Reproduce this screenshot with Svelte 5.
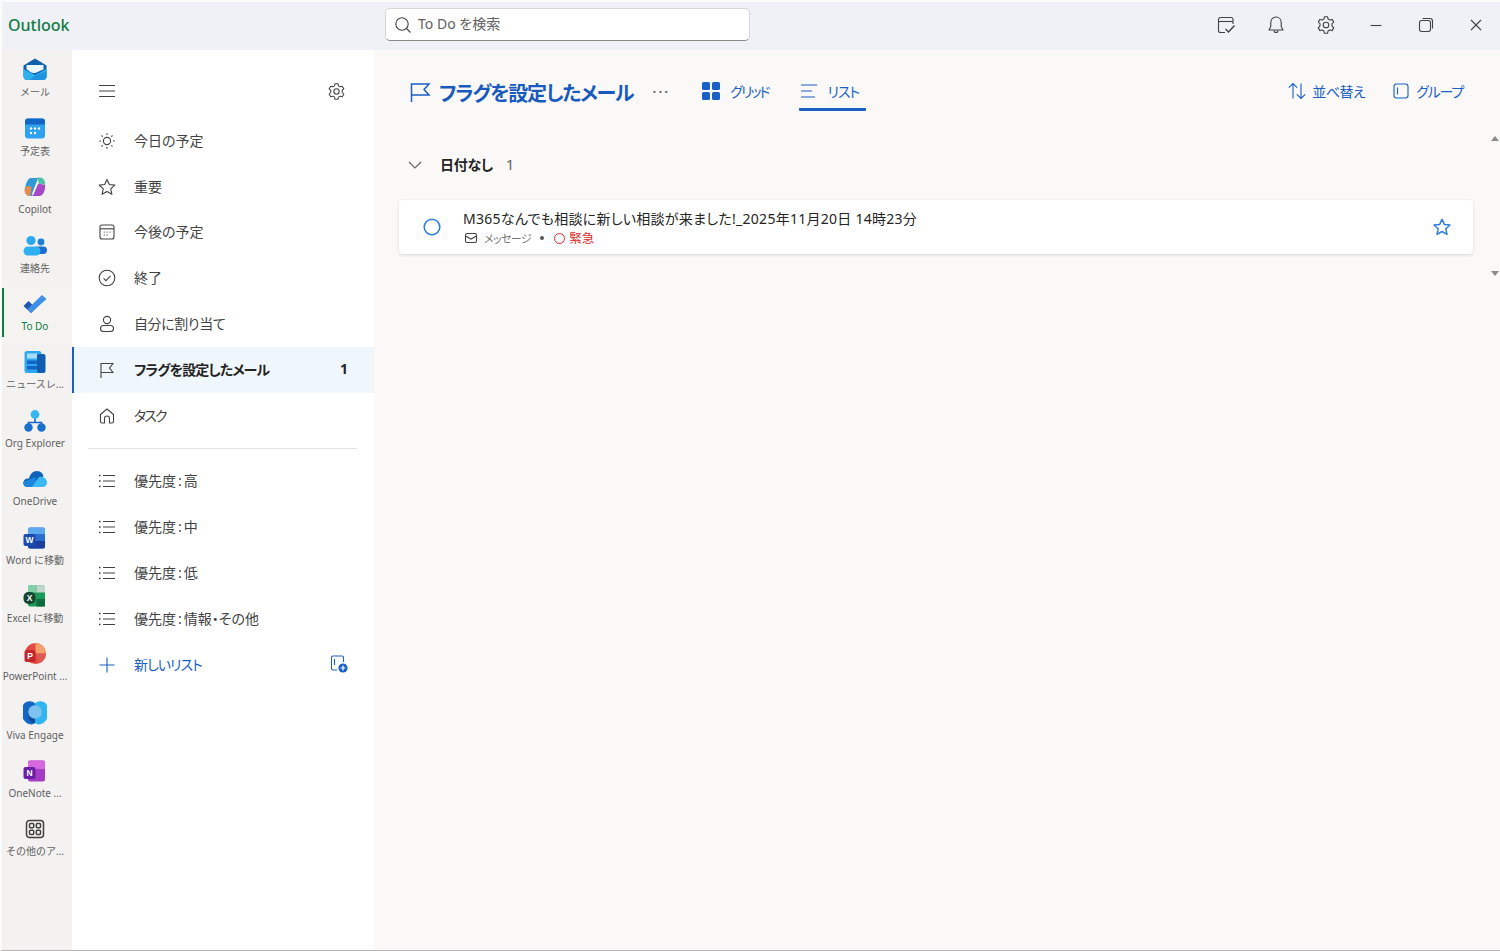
<script>
  const navTop = [
    { label: '今日の予定', icon: 'sun' },
    { label: '重要', icon: 'star' },
    { label: '今後の予定', icon: 'cal' },
    { label: '終了', icon: 'check' },
    { label: '自分に割り当て', icon: 'person', tight: 'tight-s' },
    { label: 'フラグを設定したメール', icon: 'flag', active: true, count: 1 },
    { label: 'タスク', icon: 'home', tight: 'tight-l' }
  ];
  const lists = [['優先度', '高'], ['優先度', '中'], ['優先度', '低'], ['優先度', '情報・その他']];
  const rail = [
    ['mail', 'メール'], ['calendar', '予定表'], ['copilot', 'Copilot'], ['people', '連絡先'],
    ['todo', 'To Do'], ['news', 'ニュースレ...'], ['org', 'Org Explorer'], ['drive', 'OneDrive'],
    ['word', 'Word に移動'], ['excel', 'Excel に移動'], ['ppt', 'PowerPoint ...'], ['viva', 'Viva Engage'],
    ['note', 'OneNote ...'], ['more', 'その他のア...']
  ];
</script>

{#snippet railIcon(k)}
  <svg class="rail-svg" viewBox="0 0 24 24" width="24" height="24">
    {#if k === 'mail'}
      <path d="M12 0.5 L23.5 7.5 V18 a4 4 0 0 1-4 4 H4.5 a4 4 0 0 1-4-4 V7.5 Z" fill="#0f5fae"/>
      <path d="M0.5 11 L12 17 L23.5 11 V18 a4 4 0 0 1-4 4 H4.5 a4 4 0 0 1-4-4 Z" fill="#2fb0ef"/>
      <path d="M3.5 7 H20.5 V11.5 C16 13 14 15 11 15 C8 15 6 13 3.5 11 Z" fill="#eaf6fd"/>
      <path d="M7 22 C11 17 17 16 23.5 13 V18 a4 4 0 0 1-4 4 Z" fill="#1f93e0"/>
    {:else if k === 'calendar'}
      <rect x="2" y="1.5" width="20" height="20" rx="3" fill="#2ea2f0"/>
      <path d="M2 7.5 V4.5 a3 3 0 0 1 3-3 H19 a3 3 0 0 1 3 3 V7.5 Z" fill="#1466c4"/>
      <g fill="#fff"><circle cx="8" cy="11.5" r="1.2"/><circle cx="12" cy="11.5" r="1.2"/><circle cx="16" cy="11.5" r="1.2"/><circle cx="8" cy="16" r="1.2"/><circle cx="12" cy="16" r="1.2"/></g>
    {:else if k === 'copilot'}
      <path d="M8 3 H15 L9 21 H7 C3 21 1 17 2 13 C3 8 5 3 8 3 Z" fill="#2f9bd6"/>
      <path d="M1.8 14 C3 10 6 10.5 8.5 12 L7.5 21 C3.5 21 1 18 1.8 14 Z" fill="#e88a4c"/>
      <path d="M14 2.5 H17 C20.5 2.5 22.5 6 22 10 L16 8.5 Z" fill="#4fc2a6"/>
      <path d="M15 8.5 L22 10 C22.5 16 20 21 16 21 H9.5 Z" fill="#a948c6"/>
      <path d="M13.5 8 L15 8.5 L10.5 19.5 L9 19 Z" fill="#fff"/>
    {:else if k === 'people'}
      <circle cx="8" cy="6.5" r="4.6" fill="#2aa8ef"/>
      <circle cx="18" cy="8" r="3.4" fill="#1a7fd8"/>
      <rect x="11" y="12.5" width="13" height="7.5" rx="3.7" fill="#1c6fd0"/>
      <rect x="0.5" y="12.5" width="17" height="9" rx="4.5" fill="#30b0f2"/>
    {:else if k === 'todo'}
      <path d="M0.5 14 L5.5 9 L13 16 L8 21 Z" fill="#1e56b0"/>
      <path d="M8 21 L4.5 17 L19 3 L23.5 7 Z" fill="#3f8fe6"/>
    {:else if k === 'news'}
      <rect x="1.5" y="1" width="17" height="22" rx="2.5" fill="#2ea8ee"/>
      <rect x="14" y="4" width="8.5" height="19" rx="2" fill="#0f5cb0"/>
      <rect x="4" y="3.5" width="10" height="5" fill="#a7dcf8"/>
      <rect x="4" y="10.5" width="10" height="3.5" fill="#1466c4"/>
      <rect x="4" y="16" width="10" height="3.5" fill="#1466c4"/>
    {:else if k === 'org'}
      <path d="M12 8 V14 M5.5 17 V13.5 H18.5 V17" fill="none" stroke="#1466c4" stroke-width="1.6"/>
      <circle cx="12" cy="5.5" r="4.4" fill="#37b6f2"/>
      <circle cx="5.5" cy="18.5" r="4.2" fill="#1a6fcc"/>
      <circle cx="18.5" cy="18.5" r="4.2" fill="#1a6fcc"/>
    {:else if k === 'drive'}
      <path d="M5 20 C1 20 0 17 0.5 15 C1 12 4 11 6 11.5 C7 7 10 4 14 4 C18 4 20 7 20.5 9 L12 20 Z" fill="#0f62b8"/>
      <path d="M5 20 C1 20 0 17 0.5 15 L12 10 L16 20 Z" fill="#1b86de"/>
      <path d="M9 20 L16 10 C20 9 24 12 24 15.5 C24 18 22 20 19.5 20 Z" fill="#3ab8f4"/>
    {:else if k === 'word'}
      <rect x="5" y="1.5" width="17" height="21" rx="2" fill="#2a6fd0"/>
      <path d="M5 3.5 a2 2 0 0 1 2-2 H20 a2 2 0 0 1 2 2 V8 H5 Z" fill="#5fa8ee"/>
      <path d="M5 15 H22 V20.5 a2 2 0 0 1-2 2 H7 a2 2 0 0 1-2-2 Z" fill="#1b3f9e"/>
      <rect x="0.5" y="8" width="12" height="12" rx="2" fill="#1a4bb0"/>
      <text x="6.5" y="17" class="mini">W</text>
    {:else if k === 'excel'}
      <rect x="5" y="1.5" width="17" height="21" rx="2" fill="#1c9a5a"/>
      <rect x="5" y="1.5" width="8.5" height="7" fill="#7fd0a4"/>
      <rect x="13.5" y="1.5" width="8.5" height="7" fill="#c2d6cc"/>
      <rect x="13.5" y="15" width="8.5" height="7.5" fill="#0f6b3f"/>
      <rect x="0.5" y="8" width="12" height="12" rx="5" fill="#14472f"/>
      <text x="6.5" y="17" class="mini">X</text>
    {:else if k === 'ppt'}
      <circle cx="12.5" cy="11.5" r="10.5" fill="#e34a3f"/>
      <path d="M12.5 1 A10.5 10.5 0 0 1 23 11.5 H12.5 Z" fill="#f4a06a"/>
      <path d="M12.5 11.5 H23 A10.5 10.5 0 0 1 15.5 21.5 Z" fill="#de5a52"/>
      <rect x="1.5" y="8" width="11" height="12" rx="2" fill="#c4262a"/>
      <text x="7" y="17" class="mini">P</text>
    {:else if k === 'viva'}
      <path d="M12 2.5 C9 -1.5 -0.5 -0.5 -0.5 7 V15 C-0.5 21 8 26 12 22 Z" fill="#1466c4"/>
      <path d="M12 2.5 C15 -1.5 24.5 -0.5 24.5 7 V15 C24.5 21 16 26 12 22 Z" fill="#30b4f2"/>
      <circle cx="12" cy="11" r="6.8" fill="#7cc4ee"/>
      <path d="M12 17.8 C8 17.8 5.2 15 5.2 11 C4 17 8 23 12 22 Z" fill="#0f4c9a"/>
    {:else if k === 'note'}
      <rect x="5" y="1.5" width="17" height="21" rx="2" fill="#a63cc4"/>
      <path d="M5 3.5 a2 2 0 0 1 2-2 H20 a2 2 0 0 1 2 2 V10 H5 Z" fill="#d868e0"/>
      <rect x="0.5" y="8" width="12" height="12" rx="2" fill="#6a1fa8"/>
      <text x="6.5" y="17" class="mini">N</text>
    {:else}
      <g fill="none" stroke="#424242" stroke-width="1.5">
        <rect x="3.5" y="3.5" width="17" height="17" rx="3"/>
        <rect x="6.5" y="6.5" width="4.2" height="4.2" rx="1"/><rect x="13.3" y="6.5" width="4.2" height="4.2" rx="1"/>
        <rect x="6.5" y="13.3" width="4.2" height="4.2" rx="1"/><rect x="13.3" y="13.3" width="4.2" height="4.2" rx="1"/>
      </g>
    {/if}
  </svg>
{/snippet}

{#snippet navIcon(k)}
  <svg class="line" viewBox="0 0 20 20" width="20" height="20">
    {#if k === 'sun'}
      <circle cx="10" cy="10" r="3.6"/>
      <path d="M10 2.2V4M10 16V17.8M2.2 10H4M16 10H17.8M4.5 4.5L5.7 5.7M14.3 14.3L15.5 15.5M15.5 4.5L14.3 5.7M5.7 14.3L4.5 15.5"/>
    {:else if k === 'star'}
      <path d="M10 2.5 L12.3 7.5 L17.8 8.1 L13.7 11.8 L14.9 17.2 L10 14.4 L5.1 17.2 L6.3 11.8 L2.2 8.1 L7.7 7.5 Z" stroke-linejoin="round"/>
    {:else if k === 'cal'}
      <rect x="3" y="3" width="14" height="14" rx="2"/>
      <path d="M3 6.8H17"/>
      <path d="M6.8 10.2h.8M9.7 10.2h.8M12.6 10.2h.8M6.8 13h.8M9.7 13h.8" stroke-width="1.3"/>
    {:else if k === 'check'}
      <circle cx="10" cy="10" r="7.8"/>
      <path d="M6.6 10.4 L9 12.7 L13.5 7.8"/>
    {:else if k === 'person'}
      <circle cx="10" cy="6" r="3.6"/>
      <rect x="3.5" y="11.5" width="13" height="6" rx="3"/>
    {:else if k === 'flag'}
      <path d="M4 18 V3.5 H16 L12.5 8 L16 12.5 H4"/>
    {:else if k === 'home'}
      <path d="M7.5 17 H5 a1.5 1.5 0 0 1-1.5-1.5 V8.5 L10 3 L16.5 8.5 V15.5 a1.5 1.5 0 0 1-1.5 1.5 H12.5 V12.5 a2.5 2.5 0 0 0-5 0 Z" stroke-linejoin="round"/>
    {:else}
      <path d="M6 4.5H18M6 10H18M6 15.5H18" stroke-width="1.2"/>
      <path d="M2 4.5h1.6M2 10h1.6M2 15.5h1.6" stroke-width="1.6"/>
    {/if}
  </svg>
{/snippet}

{#snippet gear(size)}
  <svg class="line" viewBox="0 0 20 20" width={size} height={size}>
    <path d="M8.4 1.8 H11.6 L12.1 4.1 L13.9 5.1 L16.1 4.4 L17.7 7.1 L16 8.7 V10.8 L17.7 12.9 L16.1 15.6 L13.9 14.9 L12.1 15.9 L11.6 18.2 H8.4 L7.9 15.9 L6.1 14.9 L3.9 15.6 L2.3 12.9 L4 10.8 V8.7 L2.3 7.1 L3.9 4.4 L6.1 5.1 L7.9 4.1 Z" stroke-linejoin="round"/>
    <circle cx="10" cy="10" r="2.8"/>
  </svg>
{/snippet}

<div class="window">
  <header class="topbar">
    <div class="brand">Outlook</div>
    <div class="search">
      <svg class="line" viewBox="0 0 20 20" width="20" height="20"><circle cx="9" cy="9" r="6.2"/><path d="M13.5 13.5 L17.5 17.5"/></svg>
      <span>To Do を検索</span>
    </div>
    <div class="actions">
      <button aria-label="タスク">
        <svg class="line" viewBox="0 0 20 20" width="20" height="20"><path d="M9 17.5 H4.5 a2 2 0 0 1-2-2 V4.5 a2 2 0 0 1 2-2 H15 a2 2 0 0 1 2 2 V9"/><path d="M2.5 6.5H17"/><path d="M9.5 14 L12.5 17 L18.5 10.5" stroke-width="1.4"/></svg>
      </button>
      <button aria-label="通知">
        <svg class="line" viewBox="0 0 20 20" width="20" height="20"><path d="M10 2 C6.5 2 4.8 4.8 4.8 7.5 V11.5 L3 15 H17 L15.2 11.5 V7.5 C15.2 4.8 13.5 2 10 2 Z" stroke-linejoin="round"/><path d="M8 15.5 a2 2 0 0 0 4 0"/></svg>
      </button>
      <button aria-label="設定">{@render gear(20)}</button>
      <button aria-label="最小化">
        <svg class="line" viewBox="0 0 20 20" width="20" height="20"><path d="M4.5 10.5H15.5"/></svg>
      </button>
      <button aria-label="元に戻す">
        <svg class="line" viewBox="0 0 20 20" width="20" height="20"><rect x="3.5" y="5.5" width="11" height="11" rx="2.2"/><path d="M6.5 3.5 H14 a2.5 2.5 0 0 1 2.5 2.5 V13.5"/></svg>
      </button>
      <button aria-label="閉じる">
        <svg class="line" viewBox="0 0 20 20" width="20" height="20"><path d="M5 5 L15 15 M15 5 L5 15"/></svg>
      </button>
    </div>
  </header>

  <div class="body">
    <nav class="rail">
      {#each rail as [key, label]}
        <div class="rail-item" class:current={key === 'todo'}>
          {@render railIcon(key)}
          <span>{label}</span>
        </div>
      {/each}
    </nav>

    <aside class="side">
      <div class="side-head">
        <svg class="line" viewBox="0 0 20 20" width="20" height="20"><path d="M2 4.5H18M2 10H18M2 15.5H18"/></svg>
        {@render gear(19)}
      </div>
      {#each navTop as n}
        <div class="row {n.tight ?? ''}" class:active={n.active}>
          {@render navIcon(n.icon)}
          <span class="row-label">{n.label}</span>
          {#if n.count}<span class="count">{n.count}</span>{/if}
        </div>
      {/each}
      <div class="divider"></div>
      {#each lists as [a, b]}
        <div class="row">
          {@render navIcon('list')}
          <span class="row-label">{a}<span class="colon">:</span>{b}</span>
        </div>
      {/each}
      <div class="row new">
        <svg class="line blue" viewBox="0 0 20 20" width="20" height="20"><path d="M10 2.5V17.5M2.5 10H17.5"/></svg>
        <span class="row-label">新しいリスト</span>
        <svg class="addlist" viewBox="0 0 20 20" width="20" height="20">
          <path d="M8 16 H4 a1.5 1.5 0 0 1-1.5-1.5 V3.5 A1.5 1.5 0 0 1 4 2 H13 a1.5 1.5 0 0 1 1.5 1.5 V8" fill="none" stroke="#1a5fc4" stroke-width="1.1"/>
          <path d="M5.5 5V11" stroke="#1a5fc4" stroke-width="1.1"/>
          <circle cx="14" cy="14" r="4.6" fill="#1a5fc4"/>
          <path d="M14 11.6V16.4M11.6 14H16.4" stroke="#fff" stroke-width="1.2"/>
        </svg>
      </div>
    </aside>

    <main class="main">
      <div class="main-head">
        <svg class="line blue flag" viewBox="0 0 22 22" width="22" height="22"><path d="M2.5 21 V3 H20 L15 8.5 L20 14 H2.5" stroke-width="1.5"/></svg>
        <h1>フラグを設定したメール</h1>
        <span class="dots">···</span>
        <div class="tab grid">
          <svg viewBox="0 0 18 18" width="18" height="18" fill="#1a5fc4"><rect x="0" y="0" width="8" height="8" rx="1.6"/><rect x="10" y="0" width="8" height="8" rx="1.6"/><rect x="0" y="10" width="8" height="8" rx="1.6"/><rect x="10" y="10" width="8" height="8" rx="1.6"/></svg>
          <span>グリッド</span>
        </div>
        <div class="tab selected">
          <svg class="line blue" viewBox="0 0 18 18" width="18" height="18"><path d="M1 3H17M1 9H12M1 15H15"/></svg>
          <span>リスト</span>
        </div>
        <div class="tools">
          <div class="tool sort">
            <svg class="line blue" viewBox="0 0 20 20" width="20" height="20"><path d="M6 17.5V2.5M1.8 6.7 L6 2.5 L10.2 6.7M14 2.5V17.5M9.8 13.3 L14 17.5 L18.2 13.3"/></svg>
            <span>並べ替え</span>
          </div>
          <div class="tool grp">
            <svg class="line blue" viewBox="0 0 16 16" width="16" height="16"><rect x="1" y="1" width="14" height="14" rx="2.5"/><path d="M4.5 4.5V11.5"/></svg>
            <span>グループ</span>
          </div>
        </div>
      </div>

      <div class="group">
        <svg class="line gray" viewBox="0 0 14 14" width="14" height="14"><path d="M1 4 L7 10 L13 4"/></svg>
        <strong>日付なし</strong>
        <span>1</span>
      </div>

      <article class="card">
        <svg class="radio" viewBox="0 0 18 18" width="18" height="18"><circle cx="9" cy="9" r="7.8" fill="none" stroke="#2f7de0" stroke-width="1.6"/></svg>
        <div class="card-text">
          <div class="card-title">M365なんでも相談に新しい相談が来ました!_2025年11月20日 14時23分</div>
          <div class="meta">
            <svg class="line" viewBox="0 0 14 14" width="14" height="14"><rect x="1.5" y="2.5" width="11" height="9" rx="1.5"/><path d="M1.5 5 L7 8 L12.5 5"/></svg>
            <span class="kind">メッセージ</span>
            <span class="dot"></span>
            <span class="urgent-ring"></span>
            <span class="urgent">緊急</span>
          </div>
        </div>
        <svg class="card-star" viewBox="0 0 20 20" width="20" height="20"><path d="M10 2.2 L12.3 7.4 L18 8 L13.8 11.8 L15 17.4 L10 14.5 L5 17.4 L6.2 11.8 L2 8 L7.7 7.4 Z" fill="none" stroke="#2f7de0" stroke-width="1.5" stroke-linejoin="round"/></svg>
      </article>

      <span class="arrow up"></span>
      <span class="arrow down"></span>
    </main>
  </div>
</div>

<style>
  :global(body) {
    margin: 0;
    font-family: "Noto Sans", "Noto Sans CJK JP", sans-serif;
    font-feature-settings: "palt";
    background: #f3f2f1;
  }
  .window {
    width: 1500px;
    height: 951px;
    display: flex;
    flex-direction: column;
    box-sizing: border-box;
    border-top: 2px solid #fbfbfd;
    border-left: 2px solid #fbfbfb;
    border-bottom: 1px solid #b4b4b4;
    overflow: hidden;
    color: #242424;
  }
  .topbar {
    height: 48px;
    flex: none;
    display: flex;
    align-items: center;
    background: #f0f1f7;
  }
  .brand {
    width: 383px;
    box-sizing: border-box;
    padding: 0 0 2px 6px;
    font-size: 16px;
    font-weight: 500;
    color: #107c41;
    margin-top: -1px;
  }
  .search {
    width: 365px;
    height: 33px;
    margin-top: -3px;
    box-sizing: border-box;
    display: flex;
    align-items: center;
    gap: 5px;
    padding-left: 7px;
    background: #fff;
    border: 1px solid #d6d6d6;
    border-bottom: 1px solid #8a8a8a;
    border-radius: 5px;
    font-size: 14px;
    color: #616161;
  }
  .search span { padding-bottom: 3px; }
  .actions {
    margin-left: auto;
    margin-right: -1px;
    display: flex;
  }
  .actions button {
    width: 50px;
    height: 40px;
    margin-top: -3px;
    padding: 0;
    border: 0;
    background: none;
    display: flex;
    align-items: center;
    justify-content: center;
  }
  svg { display: block; flex: none; }
  .line {
    fill: none;
    stroke: #424242;
    stroke-width: 1.1;
  }
  .line.blue { stroke: #1a5fc4; }
  .line.gray { stroke: #616161; }
  .body {
    flex: 1;
    min-height: 0;
    display: flex;
  }
  .rail {
    width: 70px;
    flex: none;
    padding-top: 2.4px;
    background: #f3f2f1;
  }
  .rail-item {
    position: relative;
    height: 58.4px;
    box-sizing: border-box;
    margin-left: -2px;
    width: 70px;
    padding-top: 6px;
    display: flex;
    flex-direction: column;
    align-items: center;
    font-size: 10px;
    font-feature-settings: normal;
    line-height: 14px;
    color: #616161;
    white-space: nowrap;
  }
  .rail-item span { margin-top: 3px; }
  .rail-item.current { color: #107c41; background: #f5f3f0; width: 72px; padding-right: 2px; }
  .rail-item.current::before {
    content: "";
    position: absolute;
    left: 2px;
    top: 2px;
    width: 2px;
    height: 49px;
    background: #107c41;
  }
  .mini {
    fill: #fff;
    font-size: 8.5px;
    font-weight: 700;
    text-anchor: middle;
    font-family: "Liberation Sans", sans-serif;
  }
  .side {
    width: 302px;
    flex: none;
    background: #fff;
    box-shadow: 1px 0 0 #f1f1f1;
    position: relative;
  }
  .side-head {
    height: 46px;
    margin-top: 18px;
    margin-bottom: 4px;
    display: flex;
    align-items: center;
    justify-content: space-between;
    padding: 0 28px 0 25px;
  }
  .row {
    height: 45.8px;
    display: flex;
    align-items: center;
    gap: 17px;
    padding: 0 26px 0 25px;
    font-size: 14px;
    color: #424242;
    box-sizing: border-box;
  }
  .row-label { flex: 1; padding-bottom: 2px; }
  .colon { padding: 0 2px; }
  .row.tight-s { letter-spacing: -0.4px; }
  .row.tight-l { letter-spacing: -2px; }
  .row.active {
    background: #eff6fc;
    box-shadow: inset 2px 0 0 #1a5fc4;
    color: #242424;
    font-weight: 700;
    letter-spacing: -0.9px;
  }
  .count { font-size: 14px; font-weight: 700; padding-bottom: 2px; margin-right: 1px; }
  .row.new { color: #1a5fc4; letter-spacing: -1px; }
  .addlist { margin-right: -1px; margin-top: -1px; }
  .divider {
    height: 1px;
    margin: 9.4px 17px 9.6px 16px;
    background: #e3e3e3;
  }
  .main {
    flex: 1;
    min-width: 0;
    position: relative;
    background: #faf9f8;
  }
  .main-head {
    height: 84px;
    display: flex;
    align-items: center;
    padding: 0 37px 0 35px;
    color: #1a5fc4;
    font-size: 14px;
  }
  .flag { margin-right: 8px; }
  h1 {
    margin: 0;
    font-size: 20px;
    font-weight: 700;
    letter-spacing: -1.18px;
    color: #185abd;
    white-space: nowrap;
  }
  .dots {
    margin-left: 19px;
    width: 18px;
    font-size: 16px;
    font-weight: 400;
    color: #616161;
    letter-spacing: 1.5px;
  }
  .tab {
    height: 36px;
    margin-top: 1px;
    box-sizing: border-box;
    display: flex;
    align-items: center;
    gap: 10px;
    margin-left: 31px;
    border-bottom: 3px solid transparent;
    color: #1a5fc4;
    padding: 0 1px;
  }
  .tab.grid { letter-spacing: -2px; }
  .tab.selected {
    padding-right: 7px;
    margin-left: 29px;
    border-bottom-color: #1a5fc4;
    border-radius: 1px;
    letter-spacing: -1.2px;
  }
  .tools {
    margin-left: auto;
    display: flex;
    gap: 28px;
    margin-top: -2px;
  }
  .tool {
    display: flex;
    align-items: center;
    gap: 7px;
    color: #1a5fc4;
  }
  .tool.sort { gap: 5px; letter-spacing: -0.5px; }
  .tool.grp { letter-spacing: -1.2px; }
  .group {
    height: 38px;
    margin-top: 12px;
    display: flex;
    align-items: center;
    padding-left: 34px;
    font-size: 14px;
  }
  .group strong { margin-left: 18px; font-weight: 700; color: #242424; letter-spacing: -0.3px; padding-bottom: 2px; }
  .group span { margin-left: 13px; color: #616161; padding-bottom: 2px; font-size: 15px; }
  .card {
    height: 54px;
    margin: 16px 27px 0 25px;
    box-sizing: border-box;
    display: flex;
    align-items: center;
    background: #fff;
    border-radius: 4px;
    box-shadow: 0 1px 3px rgba(0,0,0,.14);
    padding: 0 21px 0 24px;
  }
  .radio { margin-right: 22px; }
  .card-text { flex: 1; min-width: 0; }
  .card-title {
    font-size: 14px;
    line-height: 19px;
    letter-spacing: 0.27px;
    color: #242424;
  }
  .meta {
    display: flex;
    align-items: center;
    font-size: 11px;
    line-height: 15px;
    color: #757575;
    margin-top: 3px;
    padding-left: 1px;
  }
  .kind { margin-left: 6px; letter-spacing: -0.6px; }
  .dot {
    width: 4px;
    height: 4px;
    border-radius: 50%;
    background: #555;
    margin: 0 0 0 9px;
  }
  .urgent-ring {
    width: 9px;
    height: 9px;
    border: 1.4px solid #d92c2c;
    border-radius: 50%;
    margin-left: 10px;
  }
  .urgent { color: #d92c2c; margin-left: 4px; font-size: 12.5px; }
  .arrow {
    position: absolute;
    right: 1px;
    width: 0;
    height: 0;
    border-left: 4px solid transparent;
    border-right: 4px solid transparent;
  }
  .arrow.up { top: 86px; border-bottom: 5px solid #8a8a8a; }
  .arrow.down { top: 221px; border-top: 5px solid #8a8a8a; }
</style>
